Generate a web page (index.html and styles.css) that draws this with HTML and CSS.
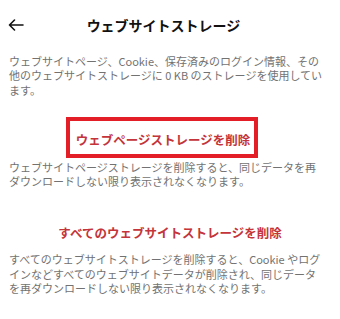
FILE: index.html
```html
<!DOCTYPE html>
<html lang="ja">
<head>
<meta charset="utf-8">
<link rel="stylesheet" href="styles.css">
</head>
<body>
<div class="page">
  <header class="topbar">
    <svg class="back" width="16" height="12" viewBox="0 0 16 12">
      <path d="M15 6H1.5M6.5 1L1.5 6l5 5" fill="none" stroke="#111" stroke-width="1.6" stroke-linecap="round" stroke-linejoin="round"/>
    </svg>
    <h1 class="title">ウェブサイトストレージ</h1>
  </header>
  <p class="desc first">ウェブサイトページ、Cookie、保存済みのログイン情報、その他のウェブサイトストレージに 0 KB のストレージを使用しています。</p>
  <div class="action-row">
    <span class="action boxed">ウェブページストレージを削除</span>
  </div>
  <p class="desc">ウェブサイトページストレージを削除すると、同じデータを再ダウンロードしない限り表示されなくなります。</p>
  <div class="action-row second">
    <span class="action">すべてのウェブサイトストレージを削除</span>
  </div>
  <p class="desc">すべてのウェブサイトストレージを削除すると、Cookie やログインなどすべてのウェブサイトデータが削除され、同じデータを再ダウンロードしない限り表示されなくなります。</p>
</div>
</body>
</html>
```
FILE: styles.css
```css
html, body {
  margin: 0;
  padding: 0;
  background: #fff;
}
body {
  font-family: "Noto Sans CJK JP", "Noto Sans", sans-serif;
}
.page {
  width: 340px;
  height: 319px;
  overflow: hidden;
}
.topbar {
  position: relative;
  height: 50px;
  display: flex;
  align-items: center;
  justify-content: center;
}
.back {
  position: absolute;
  left: 8px;
  top: 19px;
}
.title {
  margin: 0 13px 0 0;
  font-size: 14px;
  font-weight: 700;
  color: #111;
  letter-spacing: 0;
}
.desc {
  margin: 0;
  padding: 0 16px 0 9px;
  font-size: 11px;
  line-height: 14.3px;
  color: #727272;
}
.desc.first {
  margin-top: 4px;
}
.action-row {
  display: flex;
  justify-content: center;
  margin-top: 20px;
  margin-bottom: 2px;
}
.action-row.second {
  margin-top: 36px;
  margin-bottom: 10px;
}
.action {
  font-size: 12.5px;
  font-weight: 700;
  color: #c4343a;
  line-height: 18px;
  white-space: nowrap;
}
.boxed {
  border: 4px solid #e41e26;
  padding: 10px 4px 5px 6px;
  margin-right: 16px;
}
```
